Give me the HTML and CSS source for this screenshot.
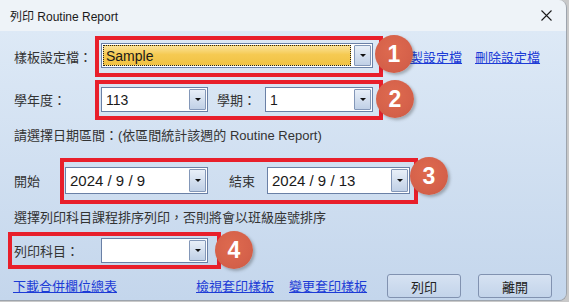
FILE: index.html
```html
<!DOCTYPE html>
<html lang="zh-Hant">
<head>
  <meta charset="UTF-8">
  <title>列印 Routine Report</title>
  <link rel="stylesheet" href="styles.css">
</head>
<body>
  <div class="window">
    <div class="titlebar">
      <span class="title">列印 Routine Report</span>
      <svg class="close" width="11" height="11" viewBox="0 0 11 11">
        <path d="M0.5 0.5 L10.5 10.5 M10.5 0.5 L0.5 10.5" stroke="#1b1b1b" stroke-width="1.1" fill="none"/>
      </svg>
    </div>

    <div class="content">
      <div class="row row-template">
        <span class="label label-wide">樣板設定檔：</span>
        <div class="mark mark-1">
          <div class="combo combo-template">
            <span class="value value-focus"><span class="focus-rect">Sample</span></span>
            <span class="drop"><i class="caret"></i></span>
          </div>
          <span class="badge badge-1">1</span>
        </div>
        <a class="link link-copy" href="#">複製設定檔</a>
        <a class="link link-delete" href="#">刪除設定檔</a>
      </div>

      <div class="row row-year">
        <span class="label label-wide">學年度：</span>
        <div class="mark mark-2">
          <div class="combo combo-year">
            <span class="value">113</span>
            <span class="drop"><i class="caret"></i></span>
          </div>
          <span class="label label-term">學期：</span>
          <div class="combo combo-term">
            <span class="value">1</span>
            <span class="drop"><i class="caret"></i></span>
          </div>
          <span class="badge badge-2">2</span>
        </div>
      </div>

      <p class="note note-date">請選擇日期區間：(依區間統計該週的 Routine Report)</p>

      <div class="row row-date">
        <span class="label label-start">開始</span>
        <div class="mark mark-3">
          <div class="combo combo-date">
            <span class="value">2024 / 9 / 9</span>
            <span class="drop"><i class="caret"></i></span>
          </div>
          <span class="label label-end">結束</span>
          <div class="combo combo-date">
            <span class="value">2024 / 9 / 13</span>
            <span class="drop"><i class="caret"></i></span>
          </div>
          <span class="badge badge-3">3</span>
        </div>
      </div>

      <p class="note note-subject">選擇列印科目課程排序列印，否則將會以班級座號排序</p>

      <div class="row row-subject">
        <div class="mark mark-4">
          <span class="label label-subject">列印科目：</span>
          <div class="combo combo-subject">
            <span class="value"></span>
            <span class="drop"><i class="caret"></i></span>
          </div>
          <span class="badge badge-4">4</span>
        </div>
      </div>

      <div class="row row-actions">
        <a class="link link-download" href="#">下載合併欄位總表</a>
        <a class="link link-view" href="#">檢視套印樣板</a>
        <a class="link link-change" href="#">變更套印樣板</a>
        <button class="btn btn-print">列印</button>
        <button class="btn btn-exit">離開</button>
      </div>
    </div>
  </div>
</body>
</html>
```

FILE: styles.css
```css
body {
  margin: 0;
  background: #c9c9c9;
  font-family: "Noto Sans CJK TC", sans-serif;
  color: #333;
}

.window {
  width: 566px;
  height: 300px;
  border-right: 1px solid #9da4ad;
  border-bottom: 1px solid #9da4ad;
  border-radius: 0 8px 8px 0;
  overflow: hidden;
  display: flex;
  flex-direction: column;
}

.titlebar {
  height: 31px;
  flex: none;
  background: #eef3f8;
  display: flex;
  align-items: center;
  justify-content: space-between;
  padding: 0 14px 0 10px;
}

.title {
  font-family: "Liberation Sans", "Noto Sans CJK TC", sans-serif;
  font-size: 12px;
  color: #1a1a1a;
}

.content {
  flex: 1;
  background: linear-gradient(#dde9f6, #c4d6ec);
  padding-top: 5px;
}

.row {
  display: flex;
  align-items: center;
}

.label {
  flex: none;
  box-sizing: border-box;
  font-size: 13px;
  line-height: 16px;
  color: #333;
  padding-left: 14px;
}

.label-wide {
  width: 95px;
}

.label-term {
  padding-left: 0;
  margin-left: 9px;
  width: 48px;
}

.label-start {
  width: 60px;
}

.label-end {
  padding-left: 0;
  margin-left: 21px;
  width: 38px;
}

.label-subject {
  padding-left: 0;
  width: 87px;
}

/* red annotation frames */
.mark {
  position: relative;
  display: flex;
  align-items: center;
  border: 4px solid #e81f2b;
}

.mark-1 {
  padding: 3px 6px 5px 2px;
}

.mark-2 {
  padding: 3px 6px 4px 2px;
}

.mark-3 {
  padding: 5px 4px 6px 1px;
}

.mark-4 {
  padding: 2px 9px 2px 2px;
}

.badge {
  position: absolute;
  width: 38px;
  height: 38px;
  border-radius: 50%;
  background: radial-gradient(circle at 45% 40%, #de6a4f 0%, #d5614a 60%, #c95a43 100%);
  box-shadow: 2px 2px 3px rgba(60, 60, 60, 0.35);
  color: #fff;
  font-family: "Liberation Sans", sans-serif;
  font-weight: bold;
  font-size: 23px;
  line-height: 38px;
  text-align: center;
  z-index: 2;
}

.badge-1 { left: 276px; top: -5px; }
.badge-2 { left: 277px; top: -4px; }
.badge-3 { left: 346px; top: -5px; }
.badge-4 { left: 203px; top: -5px; }

/* combo boxes */
.combo {
  box-sizing: border-box;
  display: flex;
  height: 25px;
  border: 1px solid #6a80a6;
  background: #fff;
}

.combo .value {
  flex: 1;
  display: flex;
  align-items: center;
  padding-left: 4px;
  font-family: "Liberation Sans", sans-serif;
  font-size: 14px;
  color: #1a1a1a;
  white-space: nowrap;
}

.combo .value-focus {
  padding-left: 0;
  margin: 1px 2px 1px 1px;
  border: 1px dotted #222;
  background: linear-gradient(#fbe39a, #f5ca52 45%, #f1c243);
}

.focus-rect {
  padding-left: 2px;
}

.drop {
  flex: none;
  width: 15px;
  margin: 1px;
  border: 1px solid #8397b8;
  border-radius: 1px;
  background: linear-gradient(#e8eff8, #c0d0e6);
  display: flex;
  align-items: center;
  justify-content: center;
}

.caret {
  width: 0;
  height: 0;
  border-left: 3px solid transparent;
  border-right: 3px solid transparent;
  border-top: 3px solid #111;
}

.combo-template {
  width: 272px;
}

.combo-year {
  width: 107px;
}

.combo-term {
  width: 108px;
}

.combo-date {
  width: 143px;
  height: 27px;
}

.combo-date .value {
  font-size: 15px;
}

.combo-subject {
  width: 107px;
}

/* rows */
.row-year {
  margin-top: 3px;
}

.note {
  margin: 0;
  padding-left: 14px;
  font-family: "Liberation Sans", "Noto Sans CJK TC", sans-serif;
  font-size: 13px;
  line-height: 16px;
  color: #333;
}

.note-date {
  margin-top: 8px;
}

.row-date {
  margin-top: 14px;
}

.note-subject {
  margin-top: 6px;
}

.row-subject {
  margin-top: 6px;
  padding-left: 8px;
}

.link {
  font-size: 13px;
  line-height: 16px;
  color: #1c3bd6;
  text-decoration: underline;
  white-space: nowrap;
}

.link-copy {
  margin-left: 14px;
}

.link-delete {
  margin-left: 13px;
}

.row-actions {
  margin-top: 5px;
  height: 24px;
}

.link-download {
  margin-left: 13px;
}

.link-view {
  margin-left: 79px;
}

.link-change {
  margin-left: 15px;
}

.btn {
  box-sizing: border-box;
  width: 74px;
  height: 24px;
  padding: 0;
  border: 1px solid #8192b0;
  border-radius: 3px;
  background: linear-gradient(#d6e2f2, #c3d4ea);
  font-family: "Noto Sans CJK TC", sans-serif;
  font-size: 13px;
  color: #222;
}

.btn-print {
  margin-left: 20px;
}

.btn-exit {
  margin-left: 17px;
}
```
